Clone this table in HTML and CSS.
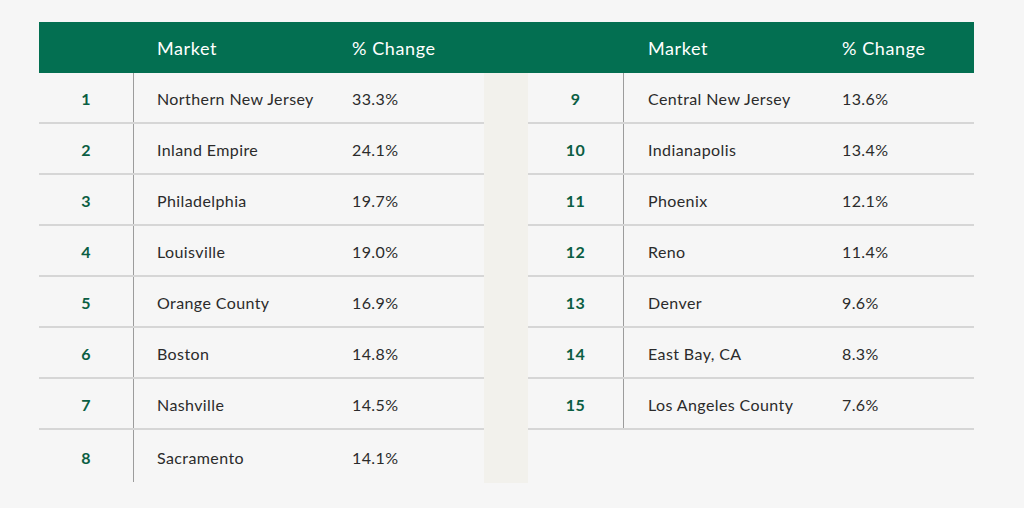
FILE: index.html
```html
<!DOCTYPE html>
<html>
<head>
<meta charset="utf-8">
<link rel="stylesheet" href="styles.css">
</head>
<body>
<div class="board">
  <div class="panel">
    <div class="head">
      <div class="num"></div>
      <div class="mkt">Market</div>
      <div class="pct">% Change</div>
    </div>
    <div class="row"><div class="num">1</div><div class="mkt">Northern New Jersey</div><div class="pct">33.3%</div></div>
    <div class="row"><div class="num">2</div><div class="mkt">Inland Empire</div><div class="pct">24.1%</div></div>
    <div class="row"><div class="num">3</div><div class="mkt">Philadelphia</div><div class="pct">19.7%</div></div>
    <div class="row"><div class="num">4</div><div class="mkt">Louisville</div><div class="pct">19.0%</div></div>
    <div class="row"><div class="num">5</div><div class="mkt">Orange County</div><div class="pct">16.9%</div></div>
    <div class="row"><div class="num">6</div><div class="mkt">Boston</div><div class="pct">14.8%</div></div>
    <div class="row"><div class="num">7</div><div class="mkt">Nashville</div><div class="pct">14.5%</div></div>
    <div class="row last"><div class="num">8</div><div class="mkt">Sacramento</div><div class="pct">14.1%</div></div>
  </div>
  <div class="gap">
    <div class="gap-head"></div>
    <div class="gap-body"></div>
  </div>
  <div class="panel right">
    <div class="head">
      <div class="num"></div>
      <div class="mkt">Market</div>
      <div class="pct">% Change</div>
    </div>
    <div class="row"><div class="num">9</div><div class="mkt">Central New Jersey</div><div class="pct">13.6%</div></div>
    <div class="row"><div class="num">10</div><div class="mkt">Indianapolis</div><div class="pct">13.4%</div></div>
    <div class="row"><div class="num">11</div><div class="mkt">Phoenix</div><div class="pct">12.1%</div></div>
    <div class="row"><div class="num">12</div><div class="mkt">Reno</div><div class="pct">11.4%</div></div>
    <div class="row"><div class="num">13</div><div class="mkt">Denver</div><div class="pct">9.6%</div></div>
    <div class="row"><div class="num">14</div><div class="mkt">East Bay, CA</div><div class="pct">8.3%</div></div>
    <div class="row"><div class="num">15</div><div class="mkt">Los Angeles County</div><div class="pct">7.6%</div></div>
  </div>
</div>
</body>
</html>
```

FILE: styles.css
```css
html, body {
  margin: 0;
  padding: 0;
  background: #f6f6f6;
}
body {
  font-family: "Lato", "Noto Sans", sans-serif;
  color: #2b2b2b;
  height: 508px;
  overflow: hidden;
}
.board {
  display: flex;
  align-items: flex-start;
  margin: 22px 0 0 39px;
  width: 935px;
}
.panel {
  width: 445px;
  display: flex;
  flex-direction: column;
}
.panel.right {
  width: 446px;
}
.head, .row {
  display: grid;
  grid-template-columns: 95px 195px 1fr;
  align-items: center;
}
.panel.right .head, .panel.right .row {
  grid-template-columns: 96px 194px 1fr;
}
.head {
  height: 51px;
  background: #036f51;
  color: #ffffff;
  font-size: 18px;
  letter-spacing: 0.6px;
}
.head > div, .row > div {
  padding-left: 23px;
}
.panel.right .head > div, .panel.right .row > div {
  padding-left: 24px;
}
.head .num, .row .num, .panel.right .head .num, .panel.right .row .num {
  padding-left: 0;
}
.row {
  height: 51px;
  box-sizing: border-box;
  border-bottom: 2px solid #d6d6d6;
  font-size: 16px;
  letter-spacing: 0.4px;
}
.row.last {
  border-bottom: none;
  height: 52px;
}
.row .num {
  height: 100%;
  display: flex;
  align-items: center;
  justify-content: center;
  border-right: 1px solid #9c9c9c;
  color: #0b5e43;
  font-weight: 700;
  box-sizing: border-box;
  padding-top: 2px;
}
.row > div {
  padding-top: 2px;
}
.gap {
  width: 44px;
  display: flex;
  flex-direction: column;
}
.gap-head {
  height: 51px;
  background: #036f51;
}
.gap-body {
  height: 410px;
  background: #f2f1ec;
}
```
